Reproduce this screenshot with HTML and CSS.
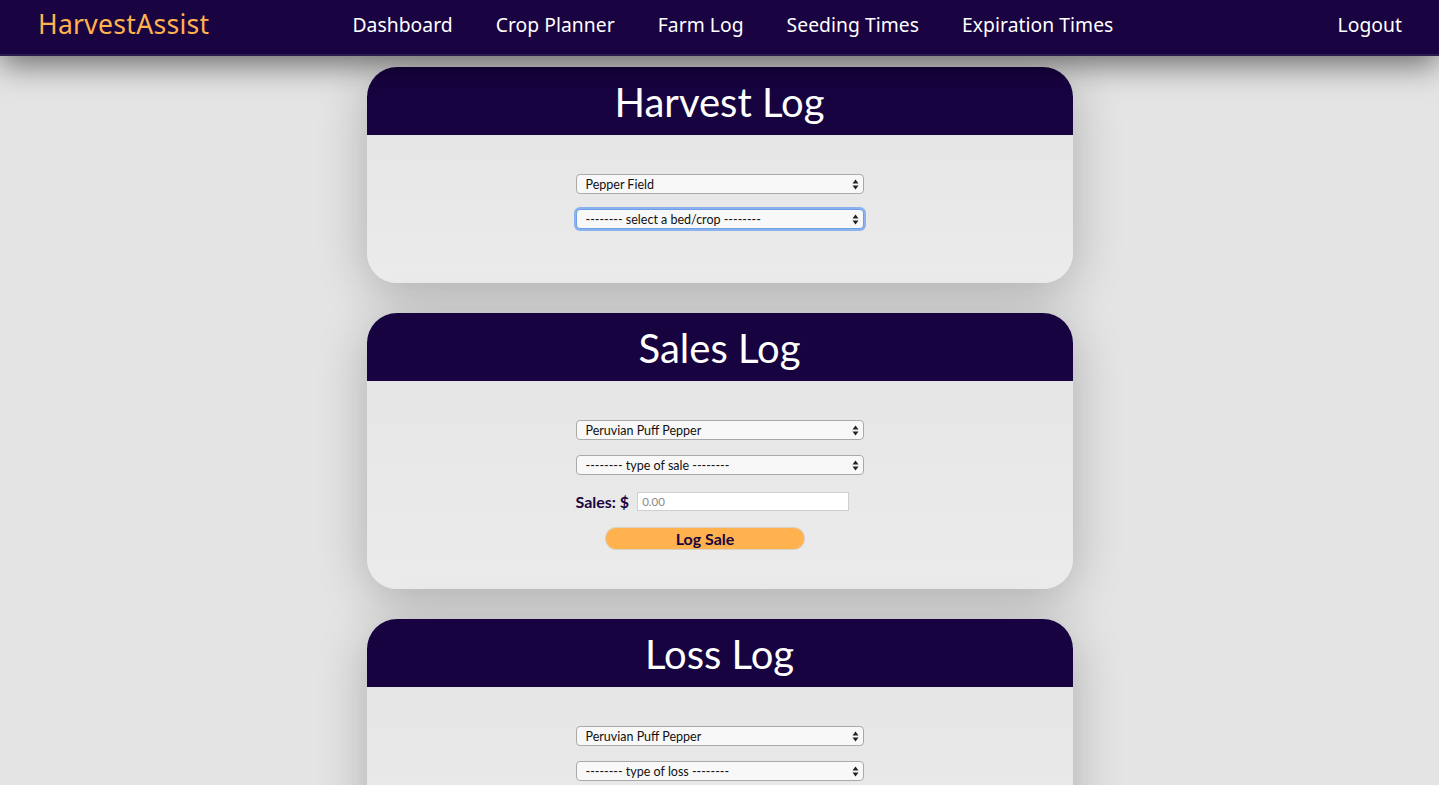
FILE: index.html
```html
<!DOCTYPE html>
<html>
<head>
<meta charset="utf-8">
<title>HarvestAssist - Farm Log</title>
<link rel="stylesheet" href="styles.css">
</head>
<body>
<nav class="navbar">
  <a class="brand" href="#">HarvestAssist</a>
  <ul class="nav-links">
    <li><a href="#">Dashboard</a></li>
    <li><a href="#">Crop Planner</a></li>
    <li><a href="#">Farm Log</a></li>
    <li><a href="#">Seeding Times</a></li>
    <li><a href="#">Expiration Times</a></li>
  </ul>
  <a class="logout" href="#">Logout</a>
</nav>

<main class="content">
  <section class="card">
    <h2 class="card-title">Harvest Log</h2>
    <div class="card-body">
      <div class="select-wrap">
        <select class="sel"><option>Pepper Field</option></select>
        <svg class="arrows" width="7" height="11" viewBox="0 0 7 11"><path d="M3.5 0.5L6.5 4.5H0.5Z M3.5 10.5L6.5 6.5H0.5Z" fill="#222"/></svg>
      </div>
      <div class="select-wrap">
        <select class="sel sel-focus"><option>-------- select a bed/crop --------</option></select>
        <svg class="arrows" width="7" height="11" viewBox="0 0 7 11"><path d="M3.5 0.5L6.5 4.5H0.5Z M3.5 10.5L6.5 6.5H0.5Z" fill="#222"/></svg>
      </div>
    </div>
  </section>

  <section class="card">
    <h2 class="card-title">Sales Log</h2>
    <div class="card-body">
      <div class="select-wrap">
        <select class="sel"><option>Peruvian Puff Pepper</option></select>
        <svg class="arrows" width="7" height="11" viewBox="0 0 7 11"><path d="M3.5 0.5L6.5 4.5H0.5Z M3.5 10.5L6.5 6.5H0.5Z" fill="#222"/></svg>
      </div>
      <div class="select-wrap">
        <select class="sel"><option>-------- type of sale --------</option></select>
        <svg class="arrows" width="7" height="11" viewBox="0 0 7 11"><path d="M3.5 0.5L6.5 4.5H0.5Z M3.5 10.5L6.5 6.5H0.5Z" fill="#222"/></svg>
      </div>
      <div class="amount-row">
        <label class="amount-label">Sales: $</label>
        <input class="amount" type="text" placeholder="0.00">
      </div>
      <button class="btn">Log Sale</button>
    </div>
  </section>

  <section class="card">
    <h2 class="card-title">Loss Log</h2>
    <div class="card-body">
      <div class="select-wrap">
        <select class="sel"><option>Peruvian Puff Pepper</option></select>
        <svg class="arrows" width="7" height="11" viewBox="0 0 7 11"><path d="M3.5 0.5L6.5 4.5H0.5Z M3.5 10.5L6.5 6.5H0.5Z" fill="#222"/></svg>
      </div>
      <div class="select-wrap">
        <select class="sel"><option>-------- type of loss --------</option></select>
        <svg class="arrows" width="7" height="11" viewBox="0 0 7 11"><path d="M3.5 0.5L6.5 4.5H0.5Z M3.5 10.5L6.5 6.5H0.5Z" fill="#222"/></svg>
      </div>
      <div class="amount-row">
        <label class="amount-label">Loss: $</label>
        <input class="amount" type="text" placeholder="0.00">
      </div>
      <button class="btn">Log Loss</button>
    </div>
  </section>
</main>
</body>
</html>
```

FILE: styles.css
```css
* { box-sizing: border-box; }

html, body {
  margin: 0;
  padding: 0;
}

body {
  background: #e4e4e4;
  font-family: Lato, "Open Sans", sans-serif;
}

.navbar {
  position: sticky;
  top: 0;
  z-index: 10;
  height: 56px;
  background: #190341;
  border-bottom: 2px solid #2c1b4e;
  box-shadow: 0 8px 32px rgba(0, 0, 0, 0.55);
  display: flex;
  align-items: center;
  padding: 0 37px 6px 38px;
  font-family: "Noto Sans", "Open Sans", sans-serif;
}

.navbar a {
  text-decoration: none;
  color: #ffffff;
}

.brand {
  color: #ffb24d !important;
  font-size: 26.5px;
  letter-spacing: 0.3px;
}

.nav-links {
  list-style: none;
  margin: 0 0 0 143px;
  padding: 0;
  display: flex;
  gap: 43px;
}

.nav-links a,
.logout {
  font-size: 19.3px;
  letter-spacing: 0.05px;
}

.logout {
  margin-left: auto;
}

.content {
  display: flex;
  flex-direction: column;
  align-items: center;
  gap: 30px;
  padding: 11px 0 40px;
}

.card {
  width: 706px;
  border-radius: 30px;
  overflow: hidden;
  background: #e8e8e8;
  box-shadow: 0 10px 50px rgba(0, 0, 0, 0.24);
}

.card-title {
  margin: 0;
  height: 68px;
  background: #170340;
  color: #ffffff;
  font-family: Lato, sans-serif;
  font-weight: 400;
  font-size: 40px;
  line-height: 70px;
  text-align: center;
}

.card-body {
  display: flex;
  flex-direction: column;
  align-items: center;
  gap: 15px;
  padding: 39px 0 54px;
  background: linear-gradient(#e6e6e6, #ebebeb);
}

.card:not(:first-child) .card-body {
  padding-bottom: 39px;
}

.select-wrap {
  position: relative;
  width: 288px;
  height: 20px;
}

.sel {
  display: block;
  appearance: none;
  -webkit-appearance: none;
  width: 100%;
  height: 20px;
  margin: 0;
  padding: 0 0 0 9px;
  border: 1px solid #a9a9a9;
  border-radius: 4px;
  background: #f8f8f8;
  font-family: Lato, sans-serif;
  font-size: 12.5px;
  color: #111;
  outline: none;
}

.sel-focus {
  border-color: #6b9fe6;
  box-shadow: 0 0 0 2px rgba(110, 160, 240, 0.75);
}

.arrows {
  position: absolute;
  right: 5px;
  top: 5px;
  pointer-events: none;
}

.amount-row {
  width: 288px;
  height: 19px;
  display: flex;
  align-items: center;
  gap: 8px;
  margin-top: 2px;
}

.amount-label {
  font-family: Lato, sans-serif;
  font-weight: 700;
  font-size: 16px;
  color: #1a0440;
}

.amount {
  width: 212px;
  height: 19px;
  border: 1px solid #cfcfcf;
  background: #ffffff;
  padding: 0 4px;
  font-family: Lato, sans-serif;
  font-size: 11.5px;
}

.amount::placeholder {
  color: #888;
}

.btn {
  display: block;
  width: 200px;
  height: 23px;
  margin: 1px 0 0 -29px;
  border: 1px solid #d9d2c4;
  border-radius: 11px;
  background: #ffb24d;
  color: #1a0440;
  font-family: Lato, sans-serif;
  font-weight: 700;
  font-size: 16px;
  line-height: 20px;
  padding: 0;
}
```
